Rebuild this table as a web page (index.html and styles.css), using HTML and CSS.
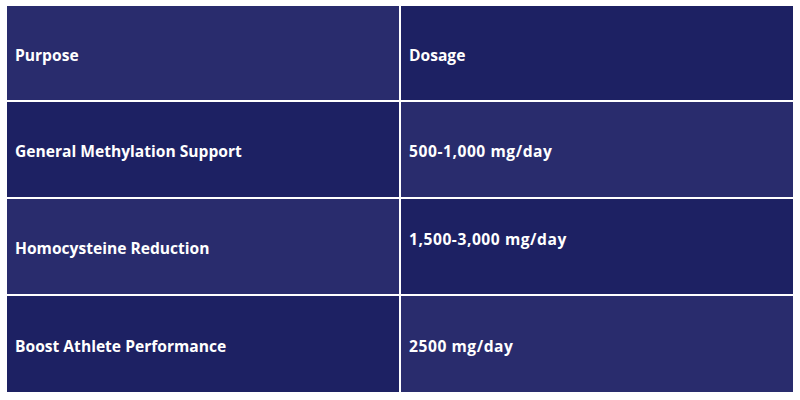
FILE: index.html
```html
<!DOCTYPE html>
<html>
<head>
<meta charset="utf-8">
<link rel="stylesheet" href="styles.css">
</head>
<body>
<div class="table">
  <div class="cell light">Purpose</div>
  <div class="cell dark">Dosage</div>
  <div class="cell dark">General Methylation Support</div>
  <div class="cell light num">500-1,000 mg/day</div>
  <div class="cell light">Homocysteine Reduction</div>
  <div class="cell dark top num">1,500-3,000 mg/day</div>
  <div class="cell dark">Boost Athlete Performance</div>
  <div class="cell light num">2500 mg/day</div>
</div>
</body>
</html>
```
FILE: styles.css
```css
html, body {
  margin: 0;
  background: #ffffff;
}
body {
  padding: 6px 8px 7px 7px;
}
.table {
  display: grid;
  grid-template-columns: 392px 392px;
  grid-template-rows: 94px 95px 95px 96px;
  gap: 2px;
  background: #ffffff;
  width: 786px;
  height: 387px;
  font-family: "Open Sans", sans-serif;
  font-weight: 700;
  font-size: 15.6px;
  color: #ffffff;
}
.cell {
  display: flex;
  align-items: center;
  padding-left: 8px;
  padding-top: 3px;
}
.cell.num {
  letter-spacing: 0.55px;
}
.cell.top {
  align-items: flex-start;
  padding-top: 29px;
}
.light { background: #292c6d; }
.dark { background: #1d2163; }
```
